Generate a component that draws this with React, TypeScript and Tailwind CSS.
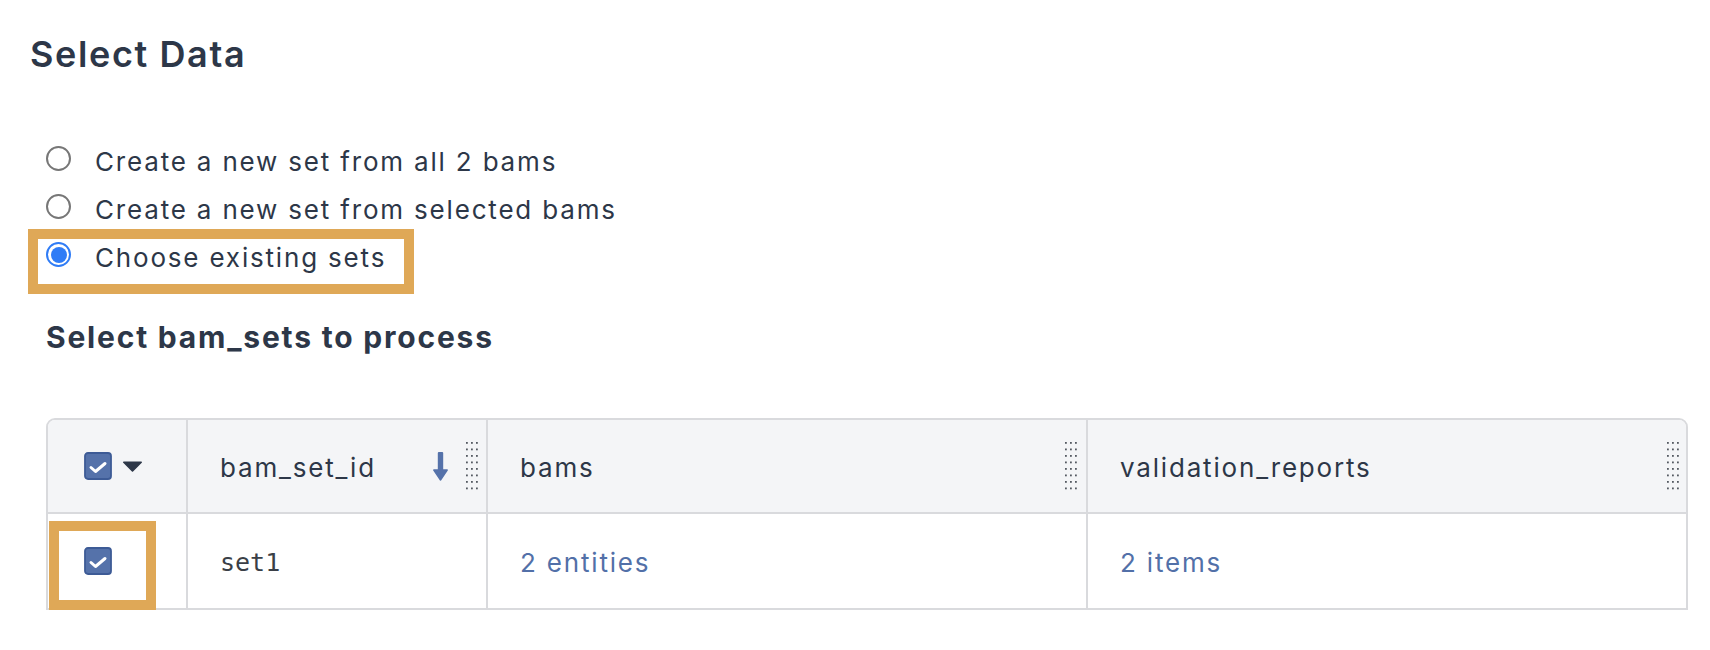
import React from 'react';

function Radio({ checked }: { checked?: boolean }) {
  if (checked) {
    return (
      <span className="mt-[8px] flex h-[25px] w-[25px] shrink-0 items-center justify-center rounded-full border-[2.3px] border-[#2f7cf6] bg-white">
        <span className="h-[16px] w-[16px] rounded-full bg-[#2f7cf6]" />
      </span>
    );
  }
  return <span className="mt-[8px] h-[25px] w-[25px] shrink-0 rounded-full border-2 border-[#777777] bg-white" />;
}

function CheckBox() {
  return (
    <svg width="28" height="28" viewBox="0 0 28 28" className="shrink-0">
      <rect x="1" y="1" width="26" height="26" rx="3" fill="#5572aa" stroke="#3d5b96" strokeWidth="1.8" />
      <path d="M7 15.5 L11.5 19.5 L21 11.5" fill="none" stroke="#ffffff" strokeWidth="3" strokeLinecap="round" strokeLinejoin="round" />
    </svg>
  );
}

function Caret() {
  return (
    <svg width="21" height="11" viewBox="0 0 21 11" className="shrink-0">
      <path d="M1.8 1.2 H19.2 L10.5 10 Z" fill="#2d3748" stroke="#2d3748" strokeWidth="1.6" strokeLinejoin="round" />
    </svg>
  );
}

function SortArrow() {
  return (
    <svg width="15" height="29" viewBox="0 0 15 29" className="shrink-0">
      <rect x="4.8" y="0" width="5.4" height="20" rx="1" fill="#5572aa" />
      <path d="M0.8 18 H14.2 L7.5 28 Z" fill="#5572aa" stroke="#5572aa" strokeWidth="1.4" strokeLinejoin="round" />
    </svg>
  );
}

function Grip() {
  const dots: React.ReactNode[] = [];
  for (let r = 0; r < 8; r++) {
    for (let c = 0; c < 3; c++) {
      dots.push(<rect key={`${r}-${c}`} x={c * 5} y={r * 6.5} width="1.8" height="1.8" fill="#555a62" />);
    }
  }
  return (
    <svg width="12" height="48" viewBox="0 0 12 48" className="shrink-0">
      {dots}
    </svg>
  );
}

export default function App() {
  return (
    <div className="min-h-[650px] bg-white pl-[30px] pr-[22px] text-[#2d3748] [font-family:Inter,sans-serif]">
      <h2 className="pt-[32px] text-[36px] font-semibold leading-[44px] tracking-[0.045em]">Select Data</h2>

      <div className="pl-[16px]">
        <div className="mt-[62px] flex flex-col">
          <div className="flex h-[48px] items-start gap-[24px]">
            <Radio />
            <span className="text-[26px] leading-[48px] tracking-[0.07em]">Create a new set from all 2 bams</span>
          </div>
          <div className="flex h-[48px] items-start gap-[24px]">
            <Radio />
            <span className="text-[26px] leading-[48px] tracking-[0.07em]">Create a new set from selected bams</span>
          </div>
          <div className="relative flex h-[48px] items-start gap-[24px]">
            <Radio checked />
            <span className="text-[26px] leading-[48px] tracking-[0.07em]">Choose existing sets</span>
            <div className="pointer-events-none absolute left-[-18px] top-[-5px] h-[65px] w-[386px] border-[10px] border-[#dfa857]" />
          </div>
        </div>

        <h3 className="mt-[37px] text-[30px] font-bold leading-[36px] tracking-[0.06em]">Select bam_sets to process</h3>

        <div className="mt-[63px] rounded-t-[9px] border-2 border-[#d9dadd]">
          <div className="grid h-[94px] grid-cols-[138px_300px_600px_1fr] rounded-t-[7px] border-b-2 border-[#d9dadd] bg-[#f4f5f7]">
            <div className="flex items-center gap-[10px] pl-[36px]">
              <CheckBox />
              <Caret />
            </div>
            <div className="flex items-center border-l-2 border-[#d9dadd] pl-[32px] pr-[8px]">
              <span className="pt-[2px] text-[26px] tracking-[0.07em]">bam_set_id</span>
              <span className="ml-auto flex items-center gap-[18px]">
                <SortArrow />
                <Grip />
              </span>
            </div>
            <div className="flex items-center border-l-2 border-[#d9dadd] pl-[32px] pr-[9px]">
              <span className="pt-[2px] text-[26px] tracking-[0.07em]">bams</span>
              <span className="ml-auto flex">
                <Grip />
              </span>
            </div>
            <div className="flex items-center border-l-2 border-[#d9dadd] pl-[32px] pr-[7px]">
              <span className="pt-[2px] text-[26px] tracking-[0.07em]">validation_reports</span>
              <span className="ml-auto flex">
                <Grip />
              </span>
            </div>
          </div>

          <div className="grid h-[94px] grid-cols-[138px_300px_600px_1fr]">
            <div className="relative flex items-center pl-[36px]">
              <CheckBox />
              <div className="pointer-events-none absolute left-[1px] top-[7px] h-[89px] w-[107px] border-[10px] border-[#dfa857]" />
            </div>
            <div className="flex items-center border-l-2 border-[#d9dadd] pl-[32px]">
              <span className="pt-[4px] text-[25px] text-[#3a3f47] [font-family:DejaVu_Sans_Mono,monospace]">set1</span>
            </div>
            <div className="flex items-center border-l-2 border-[#d9dadd] pl-[32px]">
              <span className="pt-[3px] text-[26px] tracking-[0.07em] text-[#5270a8]">2 entities</span>
            </div>
            <div className="flex items-center border-l-2 border-[#d9dadd] pl-[32px]">
              <span className="pt-[3px] text-[26px] tracking-[0.07em] text-[#5270a8]">2 items</span>
            </div>
          </div>
        </div>
      </div>
    </div>
  );
}
